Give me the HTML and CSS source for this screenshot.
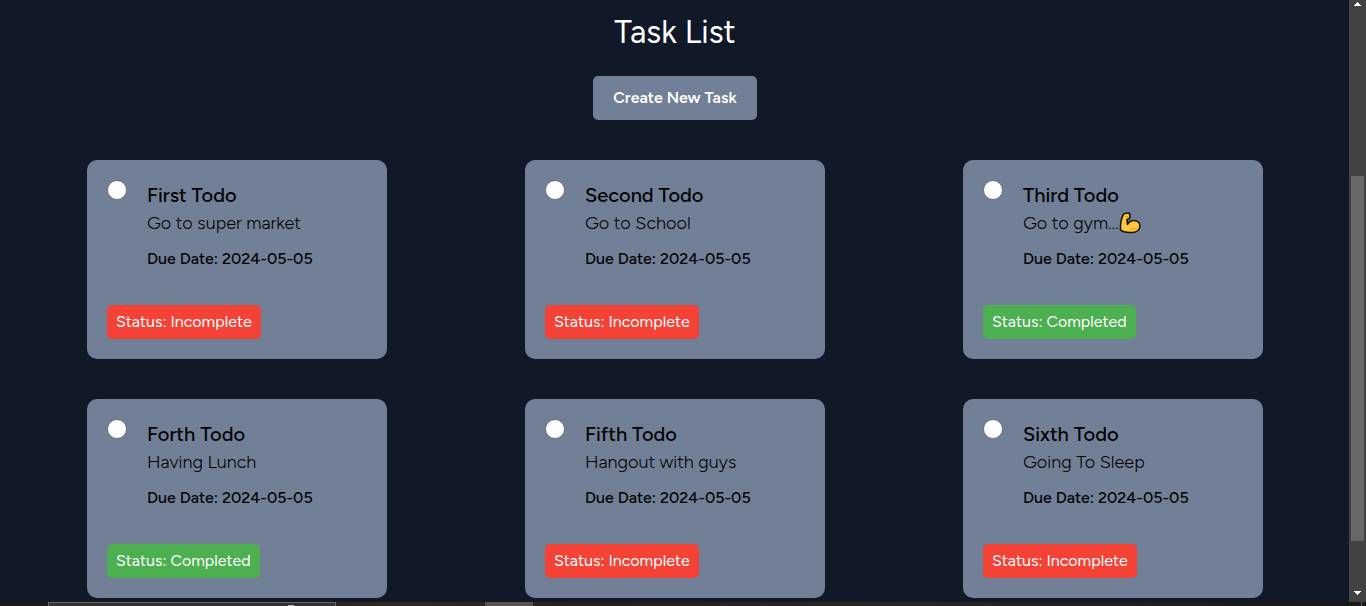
FILE: index.html
```html
<!DOCTYPE html>
<html lang="en">
<head>
<meta charset="utf-8">
<meta name="viewport" content="width=device-width, initial-scale=1">
<title>Task List</title>
<link rel="stylesheet" href="styles.css">
</head>
<body>
<div class="window">
  <main class="page">
    <h1 class="title">Task List</h1>
    <button class="create" type="button">Create New Task</button>
    <div class="tasks">
      <article class="card">
        <div class="row">
          <input class="check" type="checkbox" id="t1">
          <div class="info">
            <h2 class="name"><label for="t1">First Todo</label></h2>
            <p class="desc">Go to super market</p>
            <p class="due">Due Date: 2024-05-05</p>
          </div>
        </div>
        <span class="status incomplete">Status: Incomplete</span>
      </article>
      <article class="card">
        <div class="row">
          <input class="check" type="checkbox" id="t2">
          <div class="info">
            <h2 class="name"><label for="t2">Second Todo</label></h2>
            <p class="desc">Go to School</p>
            <p class="due">Due Date: 2024-05-05</p>
          </div>
        </div>
        <span class="status incomplete">Status: Incomplete</span>
      </article>
      <article class="card">
        <div class="row">
          <input class="check" type="checkbox" id="t3">
          <div class="info">
            <h2 class="name"><label for="t3">Third Todo</label></h2>
            <p class="desc">Go to gym...<svg class="emoji" viewBox="0 0 22 22" role="img" aria-label="flexed biceps"><path d="M5.500 1.500 9.500 1 10.800 2 11 5.500 9.800 7 8 7.200 8.500 12.500C10 9.500 12.500 8.200 15.500 8.500 19 9 21.200 11.500 20.900 14.700 20.500 18.500 16.500 20.700 11.500 20.500 7 20.400 3 19.600 1.500 17.800 1.200 12 2.500 6 4.200 2.800Z" fill="#ffc83d" stroke="#15130b" stroke-width="1.600" stroke-linejoin="round"/><path d="M6.500 4.500H9M12 17C15 17.800 17 16.800 18 15" fill="none" stroke="#e59a1c" stroke-width="1" stroke-linecap="round"/></svg></p>
            <p class="due">Due Date: 2024-05-05</p>
          </div>
        </div>
        <span class="status completed">Status: Completed</span>
      </article>
      <article class="card">
        <div class="row">
          <input class="check" type="checkbox" id="t4">
          <div class="info">
            <h2 class="name"><label for="t4">Forth Todo</label></h2>
            <p class="desc">Having Lunch</p>
            <p class="due">Due Date: 2024-05-05</p>
          </div>
        </div>
        <span class="status completed">Status: Completed</span>
      </article>
      <article class="card">
        <div class="row">
          <input class="check" type="checkbox" id="t5">
          <div class="info">
            <h2 class="name"><label for="t5">Fifth Todo</label></h2>
            <p class="desc">Hangout with guys</p>
            <p class="due">Due Date: 2024-05-05</p>
          </div>
        </div>
        <span class="status incomplete">Status: Incomplete</span>
      </article>
      <article class="card">
        <div class="row">
          <input class="check" type="checkbox" id="t6">
          <div class="info">
            <h2 class="name"><label for="t6">Sixth Todo</label></h2>
            <p class="desc">Going To Sleep</p>
            <p class="due">Due Date: 2024-05-05</p>
          </div>
        </div>
        <span class="status incomplete">Status: Incomplete</span>
      </article>
    </div>
  </main>
  <div class="scrollbar" aria-hidden="true">
    <svg class="arrow" viewBox="0 0 17 10" shape-rendering="crispEdges"><path d="M5 6V5H6V4H7V3H8V2H9V3H10V4H11V5H12V6Z" fill="#fff"/></svg>
    <div class="track"><div class="thumb"></div></div>
    <svg class="arrow" viewBox="0 0 17 11" shape-rendering="crispEdges"><path d="M5 0H12V1H11V2H10V3H9V4H8V3H7V2H6V1H5Z" fill="#fff"/></svg>
  </div>
</div>
<footer class="taskbar" aria-hidden="true">
  <div class="search"><span class="glint"></span></div>
  <div class="active"></div>
  <div class="edge"></div>
</footer>
</body>
</html>
```
FILE: styles.css
```css
* {
  box-sizing: border-box;
  margin: 0;
}

body {
  display: flex;
  flex-direction: column;
  min-height: 100vh;
  background: #111827;
  color: #000;
  font-family: Figtree, Lato, "Noto Sans", sans-serif;
}

.window {
  display: flex;
  flex: 1;
}

.page {
  display: flex;
  flex: 1;
  flex-direction: column;
  align-items: center;
  padding: 12px 37px 4px 38px;
}

.title {
  margin-bottom: 24px;
  color: #fff;
  font-size: 32px;
  font-weight: 400;
  line-height: 40px;
}

.create {
  margin-bottom: 40px;
  padding: 10px 20px;
  border: 0;
  border-radius: 5px;
  background: #718096;
  color: #fff;
  font: inherit;
  font-size: 16px;
  font-weight: 600;
  line-height: 24px;
}

.tasks {
  display: grid;
  grid-template-columns: repeat(3, 1fr);
  gap: 40px;
  justify-items: center;
  width: 100%;
}

.card {
  display: flex;
  flex-direction: column;
  align-items: flex-start;
  gap: 32px;
  width: 300px;
  padding: 20px;
  border-radius: 10px;
  background: #718096;
}

.row {
  display: flex;
  align-items: flex-start;
  gap: 20px;
}

.check {
  width: 20px;
  height: 20px;
  border: 1px solid #6b7280;
  border-radius: 50%;
  background: #fff;
  appearance: none;
}

.check:checked {
  background: #4caf50;
}

.name {
  font-size: 20px;
  font-weight: 500;
  line-height: 30px;
}

.desc {
  margin-bottom: 10px;
  font-size: 18px;
  font-weight: 300;
  line-height: 27px;
}

.emoji {
  width: 22px;
  height: 22px;
  margin-left: 1px;
  vertical-align: -5px;
}

.due {
  margin-bottom: 2px;
  font-size: 16px;
  font-weight: 500;
  line-height: 24px;
}

.status {
  padding: 5px 9px;
  border-radius: 5px;
  color: #fff;
  font-size: 16px;
  line-height: 24px;
}

.incomplete {
  background: #f44336;
}

.completed {
  background: #4caf50;
}

.scrollbar {
  display: flex;
  flex-direction: column;
  width: 17px;
  background: #424242;
}

.arrow {
  width: 17px;
  height: 11px;
}

.arrow:first-child {
  height: 10px;
}

.track {
  display: grid;
  flex: 1;
  grid-template-rows: 166fr 365fr 50fr;
  padding: 0 2px;
}

.thumb {
  grid-row: 2;
  background: #686868;
}

.taskbar {
  display: flex;
  height: 4px;
  padding-left: 48px;
  background: linear-gradient(90deg, #1c1a1a, #302820 30%, #282018 45%, #292623 65%, #181818);
}

.search {
  display: flex;
  width: 288px;
  border: 1px solid #686563;
  border-bottom: 0;
  background: #363230;
}

.glint {
  width: 6px;
  height: 2px;
  margin: 2px 0 0 239px;
  background: #bbb;
}

.active {
  width: 48px;
  margin-left: 149px;
  background: #59524e;
}

.edge {
  width: 1px;
  margin: 0 4px 0 auto;
  background: #666;
}
```
